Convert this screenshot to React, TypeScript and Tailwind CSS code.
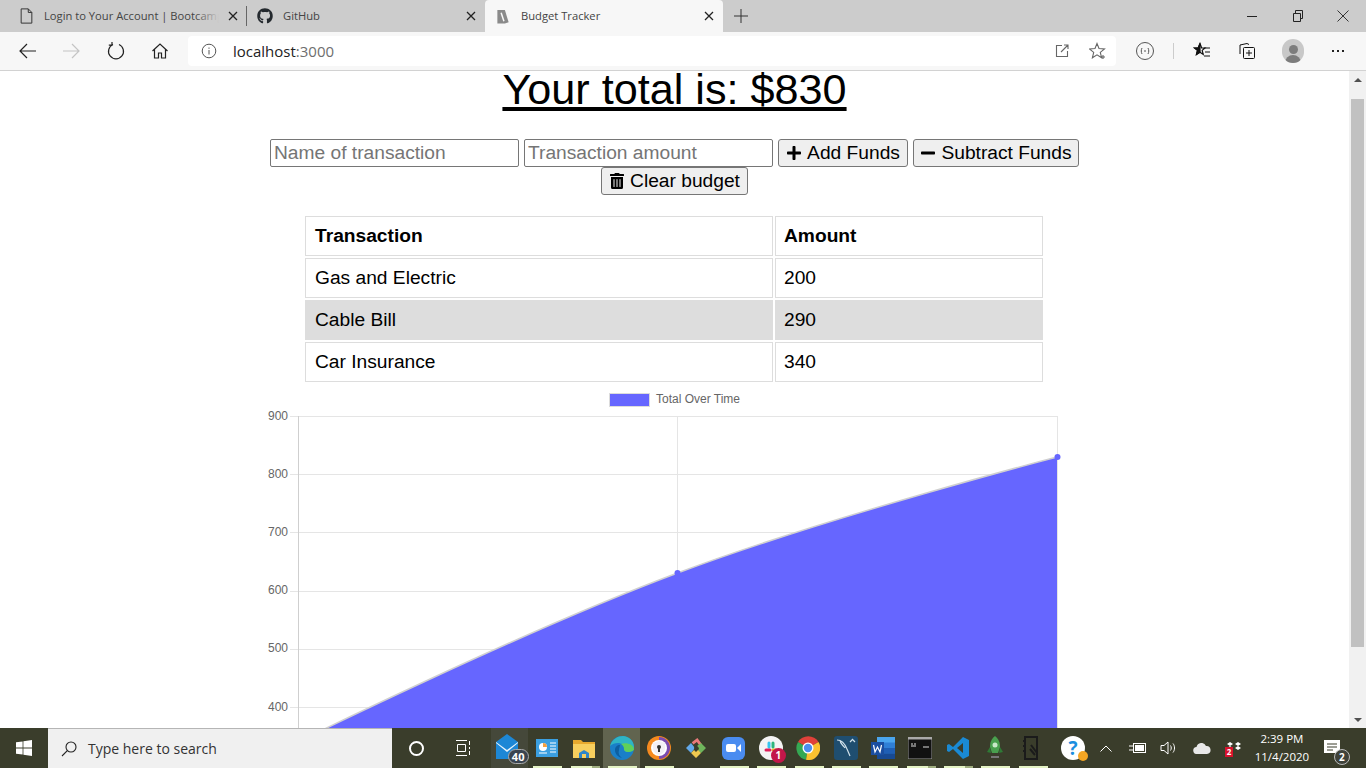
import { FaGithub, FaMinus, FaPlus, FaTrashAlt } from "react-icons/fa";
import type { ReactNode } from "react";

const uiFont = "font-['Open_Sans',sans-serif]";

function Line({ children, className = "" }: { children: ReactNode; className?: string }) {
  return (
    <svg viewBox="0 0 20 20" fill="none" stroke="currentColor" strokeWidth="1.2" className={"w-5 h-5 " + className}>
      {children}
    </svg>
  );
}

function Tab({
  title,
  icon,
  active,
  sep,
  width,
  fade,
}: {
  title: string;
  icon: ReactNode;
  active?: boolean;
  sep?: boolean;
  width: string;
  fade?: boolean;
}) {
  return (
    <div className={"relative flex items-center h-[32px] " + width + (active ? " bg-[#f7f7f7] rounded-t-[4px]" : "") + (fade ? " pl-[17px]" : " pl-[9px]")}>
      <div className="w-[18px] h-[18px] flex items-center justify-center shrink-0">{icon}</div>
      <span className={"relative ml-[9px] text-[11.2px] text-[#444] whitespace-nowrap overflow-hidden w-[175px] " + uiFont}>
        {title}
        {fade && <span className="absolute right-0 top-0 h-full w-[24px] bg-gradient-to-l from-[#cccccc] to-transparent" />}
      </span>
      <svg viewBox="0 0 10 10" className="absolute right-[9px] top-[11px] w-[10px] h-[10px]" stroke="#222" strokeWidth="1.3">
        <path d="M1 1l8 8M9 1l-8 8" />
      </svg>
      {sep && <div className="absolute right-0 top-[6px] h-[20px] w-px bg-[#666]" />}
    </div>
  );
}

function TabBar() {
  return (
    <div className="h-[32px] bg-[#cccccc] flex relative">
      <Tab
        title="Login to Your Account | Bootcamp"
        width="w-[247px]"
        sep
        fade
        icon={
          <svg viewBox="0 0 14 18" className="w-[13px] h-[16px]" fill="none" stroke="#333" strokeWidth="1.1">
            <path d="M1 1h8l4 4v12H1zM9 1v4h4" />
          </svg>
        }
      />
      <Tab title="GitHub" width="w-[238px]" icon={<FaGithub className="text-[16px] text-[#24292e]" />} />
      <Tab
        title="Budget Tracker"
        width="w-[238px]"
        active
        icon={
          <svg viewBox="0 0 14 16" className="w-[14px] h-[15px]">
            <path d="M1 1h8l4 13-4 1.5H1z" fill="#8a8a8a" />
            <path d="M5 4l3 9" stroke="#f7f7f7" strokeWidth="1.6" />
          </svg>
        }
      />
      <div className="flex items-center justify-center w-[36px]">
        <svg viewBox="0 0 14 14" className="w-[14px] h-[14px]" stroke="#333" strokeWidth="1">
          <path d="M7 0v14M0 7h14" />
        </svg>
      </div>
      <div className="flex-1" />
      <div className="flex items-center text-[#222]">
        <div className="w-[45px] flex justify-center pr-[2px]">
          <div className="w-[10px] h-px bg-[#222]" />
        </div>
        <div className="w-[45px] flex justify-center">
          <svg viewBox="0 0 12 12" className="w-[12px] h-[12px]" fill="none" stroke="#222">
            <path d="M1.5 3.5h7v8h-7zM3.5 3.5V.5h7v8h-2" />
          </svg>
        </div>
        <div className="w-[46px] flex justify-center">
          <svg viewBox="0 0 12 12" className="w-[12px] h-[12px]" stroke="#222" strokeWidth="0.9">
            <path d="M.5.5l11 11M11.5.5l-11 11" />
          </svg>
        </div>
      </div>
    </div>
  );
}

function ToolBar() {
  return (
    <div className="h-[39px] bg-[#f7f7f7] border-b border-[#d2d2d2] flex items-center text-[#222]">
      <div className="w-[188px] flex items-center pl-[18px] shrink-0">
        <Line>
          <path d="M18 10H2M9 3l-7 7 7 7" />
        </Line>
        <Line className="ml-[23px] text-[#c4c4c4]">
          <path d="M2 10h16M11 3l7 7-7 7" />
        </Line>
        <Line className="ml-[25px]">
          <path d="M7 3.5A7.5 7.5 0 1 0 13 3.5M6 1v3.2H2.8" />
        </Line>
        <Line className="ml-[24px]">
          <path d="M2.5 10L10 3l7.5 7M4.5 8.5V17h4v-5h3v5h4V8.5" />
        </Line>
      </div>
      <div className="w-[928px] h-[30px] bg-white rounded-[4px] flex items-center shrink-0">
        <svg viewBox="0 0 16 16" className="ml-[13px] w-[16px] h-[16px]" fill="none" stroke="#555">
          <circle cx="8" cy="8" r="6.8" />
          <path d="M8 7v4.5M8 4.5v1.3" />
        </svg>
        <span className={"ml-[16px] text-[15px] text-[#222] " + uiFont}>
          localhost<span className="text-[#6e6e6e]">:3000</span>
        </span>
        <div className="flex-1" />
        <svg viewBox="0 0 14 14" className="w-[14px] h-[14px]" fill="none" stroke="#666" strokeWidth="1.1">
          <path d="M7 1.5H1.5v11h11V7M6 8l7-7M9 1h4v4" />
        </svg>
        <svg viewBox="0 0 18 18" className="ml-[20px] mr-[9px] w-[18px] h-[18px]" fill="none" stroke="#666" strokeWidth="1.1">
          <path d="M8 1.5l2 5 5.5.4-4.2 3.5 1.3 5.3L8 12.8l-4.6 2.9 1.3-5.3L.5 6.9 6 6.5z" />
          <path d="M14 13v4M12 15h4" />
        </svg>
      </div>
      <div className="flex-1 flex items-center pl-[19px]">
        <svg viewBox="0 0 20 20" className="w-[20px] h-[20px]" fill="none" stroke="#555" strokeWidth="1">
          <circle cx="10" cy="10" r="8.5" />
          <path d="M7 7c-1 2-1 4 0 6M13 7c1 2 1 4 0 6M9 10h2" />
        </svg>
        <div className="ml-[18px] w-px h-[16px] bg-[#ccc]" />
        <svg viewBox="0 0 18 18" className="ml-[19px] w-[18px] h-[18px]" fill="none" stroke="#111" strokeWidth="1.2">
          <path d="M7 1.5l1.6 4.3 3.4.2-2.8 2.4 1 4-3.2-2.2-3.4 2.2 1-4L1.5 6l3.8-.2z" />
          <path d="M7 1.5L5.3 5.8 1.5 6l2.9 2.4-1 4L7 10.2z" fill="#111" />
          <path d="M11 6h6M12 10h5M11 14h6" />
        </svg>
        <svg viewBox="0 0 18 18" className="ml-[27px] w-[18px] h-[18px]" fill="none" stroke="#111">
          <path d="M2 12V3l7-1.5 2 1" />
          <rect x="5.5" y="5.5" width="11" height="11" rx="1" fill="#f7f7f7" />
          <path d="M11 8v6M8 11h6" />
        </svg>
        <div className="ml-[26px] w-[22px] h-[24px] rounded-full bg-[#c8c8c8] flex flex-col items-center justify-end overflow-hidden">
          <div className="w-[9px] h-[9px] rounded-full bg-[#7d7d7d] mb-[1px]" />
          <div className="w-[16px] h-[8px] rounded-t-full bg-[#7d7d7d]" />
        </div>
        <div className="ml-[28px] flex gap-[3px]">
          <div className="w-[2px] h-[2px] bg-[#222]" />
          <div className="w-[2px] h-[2px] bg-[#222]" />
          <div className="w-[2px] h-[2px] bg-[#222]" />
        </div>
      </div>
    </div>
  );
}

function BudgetForm() {
  const input =
    "w-[249px] h-[28px] border border-[#767676] rounded-[2px] px-[3px] text-[19.2px] bg-white placeholder:text-[#757575]";
  const btn =
    "h-[28px] flex items-center justify-center gap-[5px] border border-[#767676] rounded-[3px] bg-[#efefef] text-[19.2px] text-black";
  return (
    <div className="w-[900px] mx-auto mt-[32px] flex flex-wrap justify-center gap-x-[5px]">
      <input className={input} placeholder="Name of transaction" />
      <input className={input} placeholder="Transaction amount" />
      <button className={btn + " w-[130px]"}>
        <FaPlus className="text-[16px]" />
        Add Funds
      </button>
      <button className={btn + " w-[166px]"}>
        <FaMinus className="text-[16px]" />
        Subtract Funds
      </button>
      <button className={btn + " w-[147px]"}>
        <FaTrashAlt className="text-[16px]" />
        Clear budget
      </button>
    </div>
  );
}

const rows = [
  { name: "Gas and Electric", value: "200", shade: false },
  { name: "Cable Bill", value: "290", shade: true },
  { name: "Car Insurance", value: "340", shade: false },
];

function BudgetTable() {
  const cell = "h-[40px] border border-[#dddddd] text-left text-[19.2px] align-middle";
  return (
    <table className="table-fixed w-[742px] ml-[303px] mt-[19px] border-separate border-spacing-[2px]">
      <thead>
        <tr>
          <th className={cell + " pl-[9px] w-[468px] font-bold"}>Transaction</th>
          <th className={cell + " pl-[8px] font-bold"}>Amount</th>
        </tr>
      </thead>
      <tbody>
        {rows.map((r) => (
          <tr key={r.name} className={r.shade ? "bg-[#dddddd]" : ""}>
            <td className={cell + " pl-[9px]"}>{r.name}</td>
            <td className={cell + " pl-[8px]"}>{r.value}</td>
          </tr>
        ))}
      </tbody>
    </table>
  );
}

function Chart() {
  const ticks = [900, 800, 700, 600, 500, 400];
  const yOf = (v: number) => 416 + (900 - v) * 0.582;
  return (
    <svg viewBox="0 390 1349 338" className="block w-[1349px] h-[338px] mt-[6px] shrink-0">
      <rect x="609.5" y="393.5" width="40" height="13" fill="#6666ff" stroke="#dcdcdc" />
      <text x="656" y="403" fontSize="12" fill="#666" fontFamily="Liberation Sans, sans-serif">
        Total Over Time
      </text>
      {ticks.map((t) => (
        <g key={t}>
          <line x1="290" x2="1058" y1={Math.round(yOf(t)) + 0.5} y2={Math.round(yOf(t)) + 0.5} stroke="#e5e5e5" />
          <text x="288" y={yOf(t) + 3.5} fontSize="12" fill="#666" textAnchor="end" fontFamily="Liberation Sans, sans-serif">
            {t}
          </text>
        </g>
      ))}
      <line x1="298.5" x2="298.5" y1="416" y2="728" stroke="#cfcfcf" />
      <line x1="677.5" x2="677.5" y1="416" y2="728" stroke="#e5e5e5" />
      <line x1="1057.5" x2="1057.5" y1="416" y2="728" stroke="#e5e5e5" />
      <path
        d="M298 742 C298 742 522.5 631 677.5 573 C826.3 517 1057 457 1057 457 L1057 760 L298 760 Z"
        fill="#6666ff"
      />
      <path
        d="M298 742 C298 742 522.5 631 677.5 573 C826.3 517 1057 457 1057 457"
        fill="none"
        stroke="#d0d0d0"
        strokeWidth="1.5"
      />
      <circle cx="677.5" cy="573" r="3" fill="#6666ff" />
      <circle cx="1057.5" cy="457" r="3" fill="#6666ff" />
    </svg>
  );
}

function Scrollbar() {
  return (
    <div className="w-[17px] bg-[#f1f1f1] flex flex-col items-center shrink-0">
      <div className="h-[16px] flex items-center justify-center mt-[1px]">
        <div className="w-0 h-0 border-x-[4px] border-x-transparent border-b-[4px] border-b-[#505050]" />
      </div>
      <div className="w-[13px] h-[548px] mt-[11px] bg-[#c1c1c1]" />
      <div className="flex-1" />
      <div className="h-[16px] flex items-center justify-center">
        <div className="w-0 h-0 border-x-[4px] border-x-transparent border-t-[4px] border-t-[#505050]" />
      </div>
    </div>
  );
}

const apps: { icon: ReactNode; bar?: boolean; split?: boolean; bg?: string }[] = [
  {
    bg: "bg-[#45483a]",
    icon: (
      <div className="relative w-[30px] h-[30px]">
        <svg viewBox="0 0 30 30" className="w-[30px] h-[30px]">
          <path d="M1 9L12 1l11 8v17H1z" fill="#1d87d6" />
          <path d="M1 9l11 8 11-8v1l-11 9L1 10z" fill="#e8f3fb" />
        </svg>
        <div className={"absolute right-[-4px] bottom-[-1px] w-[21px] h-[15px] rounded-full bg-[#3a4450] border border-[#aaa] text-white text-[11px] font-bold leading-[13px] text-center " + uiFont}>
          40
        </div>
      </div>
    ),
  },
  {
    bar: true,
    icon: (
      <svg viewBox="0 0 22 18" className="w-[22px] h-[18px]">
        <rect width="22" height="18" fill="#3b9fe0" />
        <circle cx="7" cy="8" r="4" fill="#fff" />
        <path d="M7 8V4a4 4 0 0 1 4 4z" fill="#f4a040" />
        <path d="M14 4h6M14 7h6M14 10h6M14 13h6M3 14h8" stroke="#fff" strokeWidth="1.2" />
      </svg>
    ),
  },
  {
    bar: true,
    split: true,
    icon: (
      <svg viewBox="0 0 22 20" className="w-[22px] h-[20px]">
        <path d="M0 2h8l2 2h12v16H0z" fill="#e7a92e" />
        <path d="M0 6h22v14H0z" fill="#f7cf5e" />
        <path d="M6 20v-5l5-3 5 3v5z" fill="#2e86c9" />
        <path d="M9 20v-4h4v4z" fill="#f7cf5e" />
      </svg>
    ),
  },
  {
    bar: true,
    bg: "bg-[#61644f]",
    icon: (
      <svg viewBox="0 0 24 24" className="w-[24px] h-[24px]">
        <circle cx="12" cy="12" r="12" fill="#1a7fc8" />
        <path d="M0 10C2 3 8 0 13 0c6 0 11 5 11 11 0 3-3 5-6 5-3 0-4-2-4-3 1-4-3-6-6-6-3 0-6 1-8 3z" fill="#2fb4c4" />
        <path d="M24 13c0 2-3 3-6 3-3 0-4-2-4-3 0-2-1-4-3-5 5-2 12 0 13 5z" fill="#5fd05a" />
        <path d="M10 9c-3 0-5 2-5 5 0 4 3 7 7 8-3-2-4-5-3-8 0-2 1-4 1-5z" fill="#0d5fa0" />
      </svg>
    ),
  },
  {
    bar: true,
    icon: (
      <svg viewBox="0 0 24 24" className="w-[24px] h-[24px]">
        <circle cx="12" cy="12" r="12" fill="#f58a1f" />
        <path d="M12 1a11 11 0 0 1 11 11c0 6-5 11-11 11z" fill="#7a4bb0" />
        <circle cx="12" cy="12" r="8" fill="#fff" />
        <path d="M12 5l6 2v5c0 4-3 6-6 7-3-1-6-3-6-7V7z" fill="#f3f0f7" />
        <circle cx="12" cy="11" r="2" fill="#333" />
        <path d="M11 12h2v4h-2z" fill="#333" />
      </svg>
    ),
  },
  {
    icon: (
      <svg viewBox="0 0 24 24" className="w-[24px] h-[24px]">
        <path d="M7 7l5-5 5 5-2 2-3-3-3 3z" fill="#e97a7a" transform="rotate(8 12 12)" />
        <path d="M2 12l5-5 4 5-4 5z" fill="#62a9ea" />
        <path d="M17 7l5 5-5 5-3-2 1-3-2-2z" fill="#6fb55c" />
        <path d="M7 17l5 5 5-5-3-3-2 2-2-2z" fill="#eec84f" />
        <circle cx="12" cy="12" r="2" fill="#3a3d2b" />
      </svg>
    ),
  },
  {
    bar: true,
    icon: (
      <div className="w-[23px] h-[23px] rounded-[6px] bg-[#4a8cf0] flex items-center justify-center gap-[1px]">
        <div className="w-[10px] h-[8px] rounded-[2px] bg-white" />
        <div className="w-0 h-0 border-y-[4px] border-y-transparent border-r-[4px] border-r-white" />
      </div>
    ),
  },
  {
    bar: true,
    icon: (
      <div className="relative w-[24px] h-[24px] rounded-full bg-[#f4f4f4] flex items-center justify-center">
        <svg viewBox="0 0 14 14" className="w-[14px] h-[14px]" strokeWidth="3" strokeLinecap="round">
          <path d="M5 2v4" stroke="#36c5f0" />
          <path d="M2 9h4" stroke="#e01e5a" />
          <path d="M9 2v4" stroke="#2eb67d" />
          <path d="M9 9h3" stroke="#ecb22e" />
        </svg>
        <div className={"absolute right-[-3px] bottom-[-3px] w-[15px] h-[15px] rounded-full bg-[#c3174a] text-white text-[10px] font-bold leading-[15px] text-center " + uiFont}>
          1
        </div>
      </div>
    ),
  },
  {
    bar: true,
    icon: (
      <svg viewBox="0 0 24 24" className="w-[24px] h-[24px]">
        <path d="M12 12L2 6a12 12 0 0 1 20.5 0z" fill="#e0413a" />
        <path d="M12 12L2 6a12 12 0 0 0 8 17.8z" fill="#35a853" />
        <path d="M12 12l10.5-6A12 12 0 0 1 10 23.8z" fill="#fbc22f" />
        <circle cx="12" cy="12" r="5.5" fill="#fff" />
        <circle cx="12" cy="12" r="4.2" fill="#4d8fef" />
      </svg>
    ),
  },
  {
    bar: true,
    icon: (
      <svg viewBox="0 0 24 24" className="w-[24px] h-[24px]">
        <rect width="24" height="24" rx="3" fill="#1f4e70" />
        <path d="M3 4c5 0 8 4 10 9l3 7M6 4c0 4 3 5 5 8M18 3l3 3M16 6l2-2" fill="none" stroke="#cfe0ea" strokeWidth="1.2" />
      </svg>
    ),
  },
  {
    bar: true,
    icon: (
      <svg viewBox="0 0 24 24" className="w-[24px] h-[24px]">
        <rect x="6" y="1" width="18" height="22" fill="#2f7fd6" />
        <rect x="6" y="1" width="18" height="5.5" fill="#4aa5ee" />
        <rect x="6" y="12" width="18" height="5.5" fill="#1f5fb5" />
        <rect x="6" y="17.5" width="18" height="5.5" fill="#174a94" />
        <rect x="0" y="6" width="13" height="13" fill="#1a4ea0" />
        <path d="M2.5 9l1.5 7 2.5-5 2.5 5 1.5-7" fill="none" stroke="#fff" strokeWidth="1.2" />
      </svg>
    ),
  },
  {
    bar: true,
    split: true,
    icon: (
      <svg viewBox="0 0 24 22" className="w-[24px] h-[22px]">
        <rect width="24" height="22" fill="#111" stroke="#999" />
        <rect width="24" height="2.5" fill="#aaa" />
        <path d="M3 7h2M6 7h2M3 9h5M15 10h6" stroke="#ddd" strokeWidth="1.1" />
      </svg>
    ),
  },
  {
    bar: true,
    split: true,
    icon: (
      <svg viewBox="0 0 24 24" className="w-[24px] h-[24px]">
        <path d="M17 1l6 3v16l-6 3L7 13l-4 3-2-1V9l2-1 4 3z" fill="#1a8ad4" />
        <path d="M17 7v10l-6-5z" fill="#3a3d2b" />
      </svg>
    ),
  },
  {
    bar: true,
    icon: (
      <svg viewBox="0 0 20 26" className="w-[20px] h-[26px]">
        <path d="M10 1c4 3 5 7 5 11l-2 6H7l-2-6c0-4 1-8 5-11z" fill="#49a04e" />
        <circle cx="10" cy="10" r="2.5" fill="#c9e8c9" />
        <path d="M5 12l-3 5 4 1zM15 12l3 5-4 1z" fill="#2f7a36" />
        <path d="M6 22h8" stroke="#777" strokeWidth="2" />
      </svg>
    ),
  },
  {
    bar: true,
    icon: (
      <svg viewBox="0 0 20 24" className="w-[20px] h-[24px]" fill="none" stroke="#1b1b1b" strokeWidth="2">
        <path d="M3 1h12v22H3zM1 5h3M1 10h3M1 15h3" />
        <path d="M9 9l6 8M8 13l5 6" />
      </svg>
    ),
  },
];

function Taskbar() {
  return (
    <div className="h-[40px] bg-[#3a3d2b] flex items-stretch shrink-0 text-white">
      <div className="w-[48px] flex items-center justify-center shrink-0">
        <svg viewBox="0 0 16 16" className="w-[16px] h-[16px]" fill="#fff">
          <path d="M0 2.3L6.6 1.4V7.6H0zM7.4 1.3L16 0V7.6H7.4zM0 8.4H6.6V14.6L0 13.7zM7.4 8.4H16V16L7.4 14.7z" />
        </svg>
      </div>
      <div className="w-[344px] bg-[#f0f0f0] border-t border-[#b5b5b5] flex items-center pl-[13px] shrink-0">
        <svg viewBox="0 0 16 16" className="w-[16px] h-[16px]" fill="none" stroke="#222" strokeWidth="1.1">
          <circle cx="10" cy="6" r="5" />
          <path d="M6.3 9.7L1 15" />
        </svg>
        <span className={"ml-[11px] text-[14px] text-[#333] " + uiFont}>Type here to search</span>
      </div>
      <div className="w-[45px] flex items-center justify-center pl-[3px] shrink-0">
        <div className="w-[15px] h-[15px] rounded-full border-2 border-white" />
      </div>
      <div className="w-[54px] flex items-center justify-center pr-[2px] shrink-0">
        <svg viewBox="0 0 16 16" className="w-[16px] h-[16px]" fill="none" stroke="#fff">
          <path d="M1 .5h11M1 15.5h11M2.5 4.5h8v7h-8zM14.5 1v4M14.5 7v2M14.5 11v4" />
        </svg>
      </div>
      <div className="flex shrink-0">
        {apps.map((a, i) => (
          <div key={i} className={"relative w-[37.33px] flex items-center justify-center " + (a.bg ?? "")}>
            {a.icon}
            {a.bar && (
              <div className="absolute bottom-0 left-[5px] w-[29px] h-[2px] bg-[#e4f3c4]">
                {a.split && <div className="absolute right-0 top-0 w-[8px] h-[2px] bg-[#9fae80]" />}
              </div>
            )}
          </div>
        ))}
      </div>
      <div className="flex items-center shrink-0 pl-[10px]">
        <div className="relative w-[24px] h-[24px] rounded-full bg-white flex items-center justify-center">
          <span className={"text-[#1c8fe0] text-[19px] font-bold leading-none " + uiFont}>?</span>
          <div className="absolute right-[-3px] bottom-[-1px] w-[10px] h-[10px] rounded-full bg-[#f5a623]" />
        </div>
        <svg viewBox="0 0 12 7" className="ml-[15px] w-[12px] h-[7px]" fill="none" stroke="#fff">
          <path d="M.5 6.5L6 1l5.5 5.5" />
        </svg>
        <svg viewBox="0 0 18 12" className="ml-[17px] w-[18px] h-[12px]" fill="none" stroke="#fff">
          <rect x="4.5" y="1.5" width="12" height="9" />
          <rect x="6" y="3" width="9" height="6" fill="#fff" stroke="none" />
          <path d="M0 4h4M0 8h4" />
        </svg>
        <svg viewBox="0 0 16 16" className="ml-[13px] w-[16px] h-[16px]" fill="none" stroke="#fff">
          <path d="M1 5.5h3L8 2v12L4 10.5H1zM10.5 5.5c1 1.5 1 3.5 0 5M13 3.5c2 2.5 2 6.5 0 9" />
        </svg>
        <svg viewBox="0 0 18 11" className="ml-[17px] w-[18px] h-[11px]" fill="#e8e8e8">
          <path d="M4 11a3.5 3.5 0 0 1-.5-7 5 5 0 0 1 9.5-1 4 4 0 0 1 1 8z" />
        </svg>
        <div className="relative ml-[15px] w-[16px] h-[16px]">
          <svg viewBox="0 0 16 16" className="w-[16px] h-[16px]" fill="#fff">
            <path d="M1 4l3-2 3 2-3 2zM9 4l3-2 3 2-3 2zM1 8l3-2 3 2-3 2zM9 8l3-2 3 2-3 2z" />
          </svg>
          <div className={"absolute left-[-1px] bottom-[-1px] w-[8px] h-[10px] bg-[#d8112c] text-white text-[8px] font-bold leading-[10px] text-center " + uiFont}>
            2
          </div>
        </div>
      </div>
      <div className={"w-[74px] ml-[3px] flex flex-col items-center justify-center text-[11.5px] leading-[18px] text-white shrink-0 " + uiFont}>
        <span>2:39 PM</span>
        <span>11/4/2020</span>
      </div>
      <div className="relative flex-1 flex items-center justify-center pr-[20px]">
        <svg viewBox="0 0 16 16" className="w-[16px] h-[16px]" fill="#fff">
          <path d="M0 0h16v13H0z" />
          <path d="M3 4h10M3 7h10M3 10h6" stroke="#3a3d2b" />
        </svg>
        <div className={"absolute left-[15px] bottom-[3px] w-[16px] h-[16px] rounded-full bg-[#3f423a] border border-[#bbb] text-white text-[10px] font-bold leading-[14px] text-center " + uiFont}>
          2
        </div>
      </div>
    </div>
  );
}

export default function App() {
  return (
    <div className="w-[1366px] h-[768px] overflow-hidden flex flex-col bg-white font-['Liberation_Sans',Arial,sans-serif]">
      <TabBar />
      <ToolBar />
      <div className="flex-1 flex min-h-0">
        <main className="flex-1 overflow-hidden flex flex-col text-black">
          <h1 className="text-[43.2px] leading-[36px] text-center underline font-normal">
            Your total is: $830
          </h1>
          <BudgetForm />
          <BudgetTable />
          <Chart />
        </main>
        <Scrollbar />
      </div>
      <Taskbar />
    </div>
  );
}
